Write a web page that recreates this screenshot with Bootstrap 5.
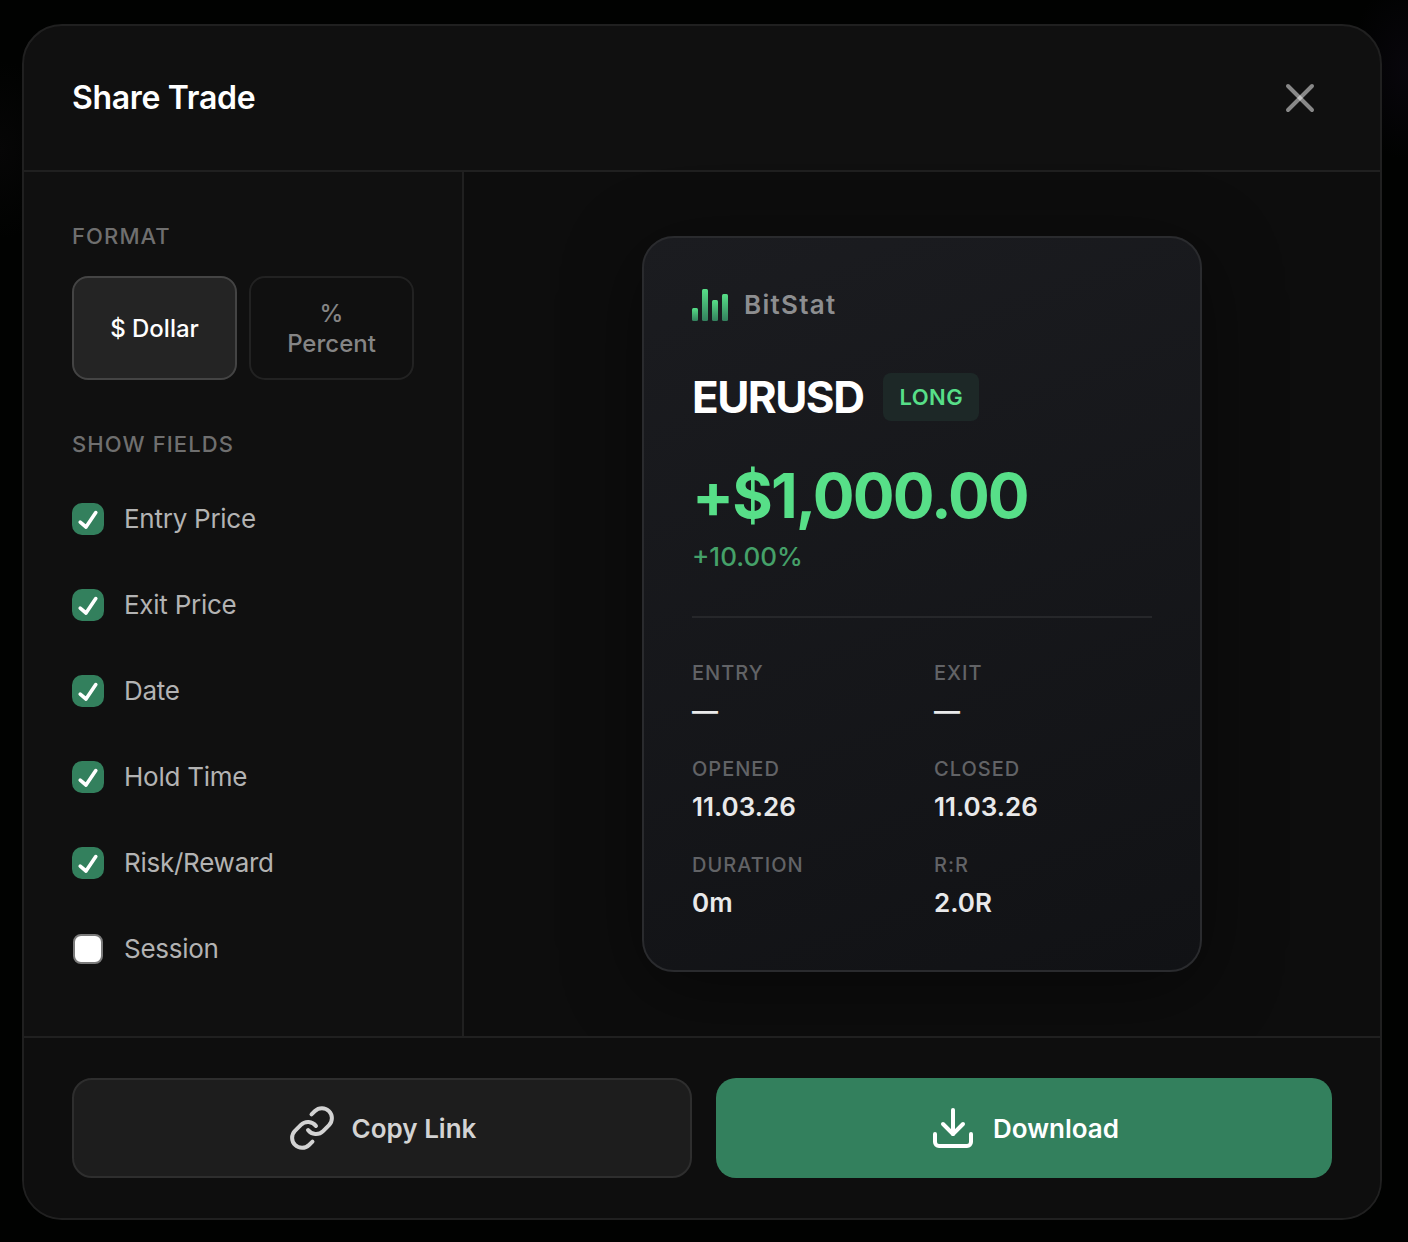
<!DOCTYPE html>
<html lang="en">
<head>
<meta charset="utf-8">
<meta name="viewport" content="width=device-width, initial-scale=1">
<title>Share Trade</title>
<link href="https://cdn.jsdelivr.net/npm/bootstrap@5.3.0/dist/css/bootstrap.min.css" rel="stylesheet">
<style>
  :root { --line: #202020; --brand: #33805d; --gain: #57df88; }
  body {
    font-family: Inter, "Liberation Sans", sans-serif;
    font-size: 26px;
    line-height: 1.5;
    color: #fff;
    background:
      radial-gradient(60px 90px at 100% 70px, #08060c, transparent),
      radial-gradient(60px 90px at 0 150px, #060606, transparent),
      #010201;
  }
  .page-frame { padding: 24px 26px 22px 22px; }
  .share-dialog {
    background: #101010;
    border: 2px solid var(--line);
    border-radius: 40px;
    overflow: hidden;
  }
  .share-head { padding: 40px 48px; border-bottom: 2px solid var(--line); }
  .share-title { font-size: 32px; line-height: 48px; font-weight: 600; letter-spacing: -.01em; }
  .close-btn { width: 64px; height: 64px; color: rgba(255,255,255,.5); }
  .close-btn:hover { color: #fff; }
  .options-pane { width: 440px; padding: 48px; border-right: 2px solid var(--line); }
  .pane-label {
    font-size: 22px; line-height: 32px; font-weight: 500;
    letter-spacing: .05em; color: #6f6f6f; margin-bottom: 24px;
  }
  .format-row { gap: 12px; margin-bottom: 48px; }
  .format-btn {
    flex: 1 1 0; height: 104px; padding: 2px 24px 0;
    border: 2px solid #222; border-radius: 16px;
    font-size: 24px; line-height: 30px; font-weight: 500; color: #858585;
  }
  .format-btn.active, .format-btn:hover { background: #242424 !important; border-color: #444 !important; color: #fff !important; }
  .field-list { gap: 16px; }
  .field-item { height: 70px; gap: 20px; line-height: 38px; letter-spacing: -.01em; color: #b3b3b3; }
  .field-item .form-check-input {
    width: 32px; height: 32px; margin: 0; border-radius: 10px;
    border: 2px solid #7b7b7b; background-color: #fff; background-clip: border-box;
    transition: none;
  }
  .field-item .form-check-input:not(:checked) { width: 30px; height: 30px; margin: 1px; border-radius: 8px; }
  .field-item .form-check-input:checked {
    border: 0; background-color: var(--brand);
    background-size: 32px 32px;
    background-image: url("data:image/svg+xml,%3Csvg xmlns='http://www.w3.org/2000/svg' viewBox='0 0 32 32'%3E%3Cpath d='M8.2 19.2L14 24L23.8 9.6' fill='none' stroke='%23fff' stroke-width='3.6' stroke-linecap='round' stroke-linejoin='round'/%3E%3C/svg%3E");
  }
  .preview-pane { padding: 64px 48px; background: #0d0d0d; }
  .trade-card {
    width: 560px; padding: 48px;
    border: 2px solid #2a2b2e; border-radius: 32px;
    background: linear-gradient(160deg, #1b1c20, #111215);
    box-shadow: 0 16px 80px rgba(0,0,0,.45);
  }
  .brand-row { gap: 16px; height: 38px; margin-bottom: 48px; }
  .brand-name { font-weight: 600; line-height: 38px; letter-spacing: .05em; color: #8d8e90; }
  .symbol-row { gap: 20px; height: 50px; margin-bottom: 40px; }
  .symbol-name { font-size: 44px; line-height: 50px; font-weight: 700; letter-spacing: -.035em; }
  .side-tag {
    height: 48px; padding: 0 16px; border-radius: 8px;
    background: #1d2827; color: var(--gain);
    font-size: 22px; line-height: 48px; font-weight: 600; letter-spacing: .02em;
  }
  .profit { font-size: 62px; line-height: 68px; font-weight: 700; letter-spacing: -.03em; color: var(--gain); }
  .profit-pct { line-height: 40px; margin-top: 7px; font-weight: 500; color: #45a169; }
  .card-rule { height: 2px; margin: 39px 0 40px; background: #26272a; }
  .stat-grid { display: grid; grid-template-columns: 1fr 1fr; gap: 24px; margin: 0; }
  .stat-grid dt { font-size: 20px; line-height: 30px; font-weight: 500; letter-spacing: .05em; color: #626366; }
  .stat-grid dd { line-height: 38px; margin: 4px 0 0; font-weight: 600; color: #e9e9ea; }
  .share-foot { gap: 24px; padding: 40px 48px; border-top: 2px solid var(--line); background: #0e0e0e; }
  .action-btn {
    flex: 1 1 0; height: 100px; gap: 16px; border-radius: 20px;
    font-size: 26px; font-weight: 600; padding: 0;
  }
  .copy-btn, .copy-btn:hover { background: #1d1d1d; border: 2px solid #2e2e2e; color: #d3d3d3; }
  .download-btn, .download-btn:hover { background: var(--brand); border: 0; color: #fff; }
  .line-icon { width: 48px; height: 48px; fill: none; stroke: currentColor; stroke-width: 2; stroke-linecap: round; stroke-linejoin: round; }
</style>
</head>
<body>
<div class="page-frame min-vh-100">
  <main class="share-dialog d-flex flex-column" role="dialog" aria-labelledby="dialog-title">
    <header class="share-head d-flex align-items-center justify-content-between">
      <h1 class="share-title m-0" id="dialog-title">Share Trade</h1>
      <button type="button" class="close-btn btn p-0 border-0 d-flex align-items-center justify-content-center" aria-label="Close">
        <svg class="line-icon" viewBox="0 0 24 24"><path d="M18 6L6 18"/><path d="M6 6l12 12"/></svg>
      </button>
    </header>

    <div class="d-flex">
      <section class="options-pane flex-shrink-0">
        <h2 class="pane-label">FORMAT</h2>
        <div class="format-row d-flex">
          <button type="button" class="format-btn btn active" aria-pressed="true">$ Dollar</button>
          <button type="button" class="format-btn btn" aria-pressed="false">% Percent</button>
        </div>
        <h2 class="pane-label">SHOW FIELDS</h2>
        <div class="field-list d-flex flex-column">
          <label class="field-item d-flex align-items-center" for="f-entry"><input class="form-check-input" type="checkbox" id="f-entry" checked>Entry Price</label>
          <label class="field-item d-flex align-items-center" for="f-exit"><input class="form-check-input" type="checkbox" id="f-exit" checked>Exit Price</label>
          <label class="field-item d-flex align-items-center" for="f-date"><input class="form-check-input" type="checkbox" id="f-date" checked>Date</label>
          <label class="field-item d-flex align-items-center" for="f-hold"><input class="form-check-input" type="checkbox" id="f-hold" checked>Hold Time</label>
          <label class="field-item d-flex align-items-center" for="f-risk"><input class="form-check-input" type="checkbox" id="f-risk" checked>Risk/Reward</label>
          <label class="field-item d-flex align-items-center" for="f-session"><input class="form-check-input" type="checkbox" id="f-session">Session</label>
        </div>
      </section>

      <section class="preview-pane flex-grow-1 d-flex align-items-center justify-content-center">
        <article class="trade-card">
          <div class="brand-row d-flex align-items-center">
            <svg width="36" height="32" viewBox="0 0 36 32" aria-hidden="true">
              <defs><linearGradient id="bar-fill" x1="0" y1="0" x2="0" y2="1"><stop offset="0" stop-color="#57df88"/><stop offset="1" stop-color="#33805d"/></linearGradient></defs>
              <g fill="url(#bar-fill)">
                <rect x="0" y="19" width="6" height="13" rx="1.5"/>
                <rect x="10" y="0" width="6" height="32" rx="1.5"/>
                <rect x="20" y="11" width="6" height="21" rx="1.5"/>
                <rect x="30" y="5" width="6" height="27" rx="1.5"/>
              </g>
            </svg>
            <span class="brand-name">BitStat</span>
          </div>
          <div class="symbol-row d-flex align-items-center">
            <span class="symbol-name">EURUSD</span>
            <span class="side-tag">LONG</span>
          </div>
          <div class="profit">+$1,000.00</div>
          <div class="profit-pct">+10.00%</div>
          <div class="card-rule"></div>
          <dl class="stat-grid">
            <div><dt>ENTRY</dt><dd>—</dd></div>
            <div><dt>EXIT</dt><dd>—</dd></div>
            <div><dt>OPENED</dt><dd>11.03.26</dd></div>
            <div><dt>CLOSED</dt><dd>11.03.26</dd></div>
            <div><dt>DURATION</dt><dd>0m</dd></div>
            <div><dt>R:R</dt><dd>2.0R</dd></div>
          </dl>
        </article>
      </section>
    </div>

    <footer class="share-foot d-flex">
      <button type="button" class="action-btn copy-btn btn d-flex align-items-center justify-content-center">
        <svg class="line-icon" viewBox="0 0 24 24" aria-hidden="true"><path d="M10 13a5 5 0 0 0 7.54.54l3-3a5 5 0 0 0-7.07-7.07l-1.72 1.71"/><path d="M14 11a5 5 0 0 0-7.54-.54l-3 3a5 5 0 0 0 7.07 7.07l1.71-1.71"/></svg>
        Copy Link
      </button>
      <button type="button" class="action-btn download-btn btn d-flex align-items-center justify-content-center">
        <svg class="line-icon" viewBox="0 0 24 24" aria-hidden="true"><path d="M21 15v4a2 2 0 0 1-2 2H5a2 2 0 0 1-2-2v-4"/><path d="M7 10l5 5 5-5"/><path d="M12 15V3"/></svg>
        Download
      </button>
    </footer>
  </main>
</div>
<script src="https://cdn.jsdelivr.net/npm/bootstrap@5.3.0/dist/js/bootstrap.bundle.min.js"></script>
</body>
</html>
